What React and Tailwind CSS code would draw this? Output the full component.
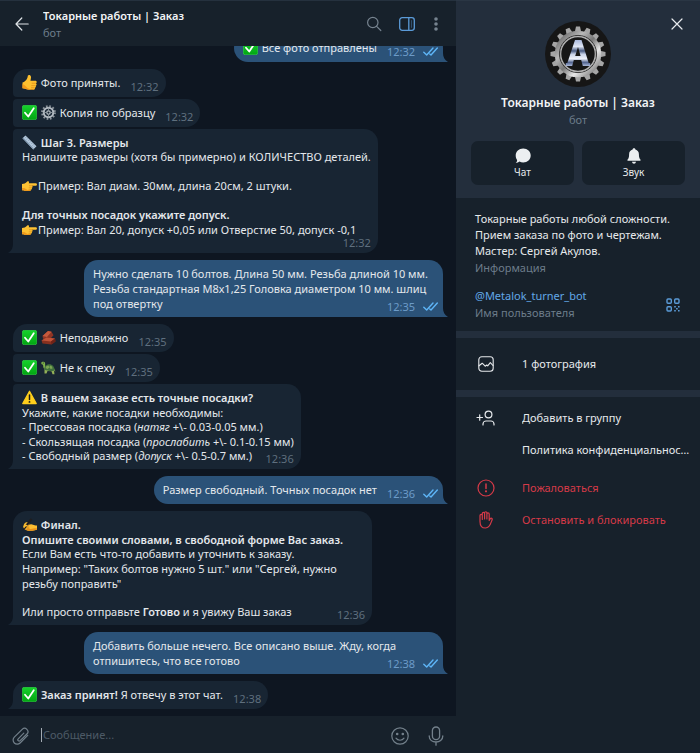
import React from "react";

/* ---------- emoji drawings ---------- */

const emojiClass = "mr-px inline-block size-[15px] align-[-3px]";

function CheckEmoji() {
  return (
    <svg viewBox="0 0 30 30" className={emojiClass} aria-hidden="true">
      <defs>
        <linearGradient id="checkFill" x1="0" y1="0" x2="0" y2="1">
          <stop offset="0" stopColor="#16d22c" />
          <stop offset="1" stopColor="#02a512" />
        </linearGradient>
      </defs>
      <rect x="0.5" y="0.5" width="29" height="29" rx="4" fill="url(#checkFill)" stroke="#3fe052" strokeWidth="1" />
      <path d="M6 15.500L12.500 23L23.500 6.500" fill="none" stroke="#fff" strokeWidth="3.600" strokeLinecap="round" strokeLinejoin="round" />
    </svg>
  );
}

function ThumbEmoji() {
  return (
    <svg viewBox="0 0 30 30" className={emojiClass} aria-hidden="true">
      <path d="M1 15c4-1 7-4 9-7.500 1.500-2.500 1.200-4.500 1.800-6.300C13.400-.8 17.500.2 18 4c.3 2.500-.8 5-1.200 7.500h9.500c4 0 4 4.600 1.200 5 2.600.8 2 4.600-.5 4.800 1.600 1 1 4-1.200 4.200.8 1.800-.5 3.500-2.500 3.500h-9.500C9 29.500 7 27 1 26.500Z" fill="#fdc02f" />
      <path d="M1 18v8.500C7 27 9 29.500 13.800 29.500h9.500c1 0 1.900-.5 2.300-1.300-5 .7-11 .3-14.600-2.200C8 24 7 20 1 18Z" fill="#f39a1a" />
      <path d="M19.500 16.500h8M18.500 21.300h8M18 25.500h7" stroke="#d9820f" strokeWidth="1.200" fill="none" />
    </svg>
  );
}

function GearEmoji() {
  return (
    <svg viewBox="0 0 30 30" className={emojiClass} aria-hidden="true">
      <circle cx="15" cy="15" r="12.800" fill="none" stroke="#8d959c" strokeWidth="4" strokeDasharray="3.350 3.350" />
      <circle cx="15" cy="15" r="9.500" fill="none" stroke="#b3bac1" strokeWidth="4" />
      <circle cx="15" cy="15" r="3.500" fill="none" stroke="#b5bcc2" strokeWidth="2.500" />
      <path d="M15 5v7M15 18v7M5 15h7M18 15h7" stroke="#8f989f" strokeWidth="1.800" />
    </svg>
  );
}

function RulerEmoji() {
  return (
    <svg viewBox="0 0 30 30" className={emojiClass} aria-hidden="true">
      <path d="M1 6.500L7 1l22 21.500L22.500 29Z" fill="#b4c8dc" />
      <path d="M1 6.500L22.500 29l1.500-1.500L2.500 5Z" fill="#7f97ae" />
      <path d="M9 3.500l-2.500 2.500M12 6.500L9 9.500M15 9.500l-2.500 2.500M18 12.500l-3 3M21 15.500L18.500 18M24 18.500l-3 3M26.500 21L24 23.500" stroke="#70869c" strokeWidth="1.100" />
    </svg>
  );
}

function PointEmoji() {
  return (
    <svg viewBox="0 0 30 30" className={emojiClass} aria-hidden="true">
      <path d="M0 12c4 0 7-1.500 10-4.500 1.500-1.500 4.500-1 4 1.500l-.5 1.500h14c3.200 0 3.200 5 0 5H20c2 1 1.500 4-.5 4.200 1 1.500.2 3.600-1.600 3.800-.5 1.800-2 2.500-4 2.500H9C6 26 4 24.500 0 24.500Z" fill="#fdc233" />
      <path d="M0 20v4.500c4 0 6 1.500 9 1.500h5c2 0 3.500-.7 4-2.500-5 1-8 .5-11-2-2-1.500-4-1.500-7-1.500Z" fill="#ef9a1c" />
      <path d="M14 15.500h8M13.500 19.700h6M13 23.500h5" stroke="#d17f10" strokeWidth="1.200" />
    </svg>
  );
}

function RockEmoji() {
  return (
    <svg viewBox="0 0 30 30" className={emojiClass} aria-hidden="true">
      <path d="M3 12L14 2l7 1.500 4 7-8 9-13-2Z" fill="#8f3524" />
      <path d="M3 12L14 2l7 1.500-9 10.500Z" fill="#c65a3d" />
      <path d="M1 21l10-6 17 2 1 6-8 6L3 27Z" fill="#86301f" />
      <path d="M1 21l10-6 17 2-8 6Z" fill="#c05439" />
      <path d="M20 23l8-6 1 6-8 6Z" fill="#6f2217" />
    </svg>
  );
}

function TurtleEmoji() {
  return (
    <svg viewBox="0 0 30 30" className={emojiClass} aria-hidden="true">
      <path d="M.5 6c0-3 6-4 7.500-.5C9 8 7 11 10 14l-3 4C3.500 15 5 12 4 9.500 2 9.500.5 8 .5 6Z" fill="#7fb04c" />
      <path d="M7 18l0 9h4l2-5 8 .5 2 6h4l-1-7 3 1.500-3-6Z" fill="#93b058" />
      <path d="M6.500 19c0-7 5-10.500 10.500-10.500s10 5 10.500 12.500c-7 2-15 1-21-2Z" fill="#40703d" />
      <path d="M11 12l4-1 2 4-4 3-4-2ZM18 11l4 2 1 4-4 1-2-4Z" fill="#7da553" />
      <circle cx="4.500" cy="5.800" r="1" fill="#1b2b17" />
    </svg>
  );
}

function WarningEmoji() {
  return (
    <svg viewBox="0 0 30 30" className={emojiClass} aria-hidden="true">
      <path d="M15 2.500L28.500 27H1.500Z" fill="#ffcf1c" stroke="#ffcf1c" strokeWidth="2.500" strokeLinejoin="round" />
      <path d="M15 10v9" stroke="#1e1c14" strokeWidth="3" strokeLinecap="round" />
      <circle cx="15" cy="23.800" r="1.900" fill="#1e1c14" />
    </svg>
  );
}

function WritingEmoji() {
  return (
    <svg viewBox="0 0 30 30" className={emojiClass} aria-hidden="true">
      <path d="M3 17c1-5 5-7 9-7 3 0 3.500 1.500 2 3.500l-1 2c4-1.500 7-1.500 9 0 2 1 4 1.500 8 1.500v9c-5-1-7 1.500-12 1.500-6 0-9-.5-12-2.500-3-2-4-4.500-3-8Z" fill="#fcbd30" />
      <path d="M6 25c3 2 6 2.500 12 2.500 5 0 7-2.500 12-1.500v-3c-5-1-8 1-12 1-4 0-9-1-12 1Z" fill="#e8921b" />
      <path d="M9 17.500h5M8.500 20.500h6M9 23.300h6" stroke="#cf7d13" strokeWidth="1.300" />
      <path d="M1 27.500L4 20L17 2.500l4 2.500L7 23Z" fill="#1f1e20" />
      <path d="M3 19c1.500-2.500 4-3.500 7-3.200 2 .2 2 2.400 0 2.700L6.500 19.500 4 23Z" fill="#fcbd30" />
    </svg>
  );
}

/* ---------- chat bubbles ---------- */

function Ticks() {
  return (
    <svg viewBox="0 0 15 9" className="mb-[3px] h-[9px] w-[15px]" fill="none" stroke="#5eb5f7" strokeWidth="1.400" strokeLinecap="round" strokeLinejoin="round" aria-label="Прочитано">
      <path d="M.8 5.200L3.700 8L10 1M6.800 7L8 8L14.300 1" />
    </svg>
  );
}

function Message({ out = false, tail = false, inline = false, first = false, wide = false, time, children }) {
  const side = out ? "self-end bg-[#2b5278]" : "self-start bg-[#182533]";
  const corners = out
    ? "rounded-[14px] rounded-br-none"
    : `rounded-r-[14px] ${first ? "rounded-tl-[14px]" : "rounded-tl-[4px]"} ${tail ? "rounded-bl-none" : "rounded-bl-[4px]"}`;
  const flow = inline ? "flex items-end justify-between gap-[10px]" : "flex flex-col";
  const footer = inline ? "" : wide ? "-mt-px self-end" : "-mt-[11px] self-end";
  return (
    <article className={`relative shrink-0 pt-[6px] pb-[3px] pl-[9px] ${wide ? "max-w-[372px]" : "max-w-[359px]"} ${out ? "pr-[5px]" : "pr-[7px]"} ${side} ${corners} ${flow}`}>
      <div className={inline ? "mb-[3px] leading-[16px] whitespace-nowrap" : "leading-[15px]"}>{children}</div>
      <div className={`flex items-end gap-[8px] leading-[14px] ${out ? "text-[#6d9bc8]" : "text-[#5f6f7e]"} ${footer}`}>
        <time>{time}</time>
        {out && <Ticks />}
      </div>
      {tail && !out && (
        <svg viewBox="0 0 5 9" className="absolute bottom-0 -left-[5px] h-[9px] w-[5px]" aria-hidden="true">
          <path d="M5 0C5 4 3.500 7 0 9H5Z" fill="#182533" />
        </svg>
      )}
      {out && (
        <svg viewBox="0 0 5 9" className="absolute -right-[5px] bottom-0 h-[9px] w-[5px]" aria-hidden="true">
          <path d="M0 0C0 4 1.500 7 5 9H0Z" fill="#2b5278" />
        </svg>
      )}
    </article>
  );
}

function Group({ children }) {
  return <div className="flex shrink-0 flex-col gap-[2px]">{children}</div>;
}

function Conversation() {
  return (
    <main className="flex min-h-0 flex-1 flex-col justify-end gap-[7px] overflow-hidden bg-[#0e1621] px-[13px] pb-[7px] text-[11px] text-[#e4e8ec]">
      <Group>
        <Message out inline time="12:32"><CheckEmoji /> Все фото отправлены</Message>
      </Group>
      <Group>
        <Message inline first time="12:32"><ThumbEmoji /> Фото приняты.</Message>
        <Message inline time="12:32"><CheckEmoji /> <GearEmoji /> Копия по образцу</Message>
        <Message tail wide time="12:32">
          <p className="font-semibold"><RulerEmoji /> Шаг 3. Размеры</p>
          <p className="leading-[14px]">Напишите размеры (хотя бы примерно) и КОЛИЧЕСТВО деталей.</p>
          <p className="mt-[14px]"><PointEmoji />Пример: Вал диам. 30мм, длина 20см, 2 штуки.</p>
          <p className="mt-[14px] font-semibold">Для точных посадок укажите допуск.</p>
          <p><PointEmoji />Пример: Вал 20, допуск +0,05 или Отверстие 50, допуск -0,1</p>
        </Message>
      </Group>
      <Group>
        <Message out time="12:35">
          Нужно сделать 10 болтов. Длина 50 мм. Резьба длиной 10 мм. Резьба стандартная М8х1,25 Головка диаметром 10 мм. шлиц под отвертку
        </Message>
      </Group>
      <Group>
        <Message inline first time="12:35"><CheckEmoji /> <RockEmoji /> Неподвижно</Message>
        <Message inline time="12:35"><CheckEmoji /> <TurtleEmoji /> Не к спеху</Message>
        <Message tail time="12:36">
          <p className="font-semibold"><WarningEmoji /> В вашем заказе есть точные посадки?</p>
          <p>Укажите, какие посадки необходимы:</p>
          <p className="leading-[14px]">- Прессовая посадка (<i>натяг</i> +\- 0.03-0.05 мм.)</p>
          <p>- Скользящая посадка (<i>прослабить</i> +\- 0.1-0.15 мм)</p>
          <p className="leading-[14px]">- Свободный размер (<i>допуск</i> +\- 0.5-0.7 мм.)</p>
        </Message>
      </Group>
      <Group>
        <Message out inline time="12:36">Размер свободный. Точных посадок нет</Message>
      </Group>
      <Group>
        <Message tail first time="12:36">
          <p className="font-semibold"><WritingEmoji /> Финал.</p>
          <p className="font-semibold">Опишите своими словами, в свободной форме Вас заказ.</p>
          <p className="leading-[14px]">Если Вам есть что-то добавить и уточнить к заказу.</p>
          <p>Например: "Таких болтов нужно 5 шт." или "Сергей, нужно резьбу поправить"</p>
          <p className="mt-[14px] leading-[14px]">Или просто отправьте <b className="font-semibold">Готово</b> и я увижу Ваш заказ</p>
        </Message>
      </Group>
      <Group>
        <Message out time="12:38">
          Добавить больше нечего. Все описано выше. Жду, когда отпишитесь, что все готово
        </Message>
      </Group>
      <Group>
        <Message inline first tail time="12:38"><CheckEmoji /> <b className="font-semibold">Заказ принят!</b> Я отвечу в этот чат.</Message>
      </Group>
    </main>
  );
}

function ChatHeader() {
  return (
    <header className="flex h-[46px] shrink-0 items-center border-t border-[#25313e] bg-[#17212b] pr-[13px] pl-[15px]">
      <button type="button" aria-label="Назад" className="text-[#e0e4e8]">
        <svg viewBox="0 0 14 14" className="size-[14px]" fill="none" stroke="currentColor" strokeWidth="1.200" strokeLinecap="round" strokeLinejoin="round">
          <path d="M13.200 7H1M6.800 1L1 7l5.800 6" />
        </svg>
      </button>
      <div className="ml-[14px] flex min-w-0 flex-1 flex-col">
        <h1 className="truncate text-[11px] leading-[17px] font-semibold text-[#f2f4f6]">Токарные работы | Заказ</h1>
        <span className="text-[11px] leading-[17px] text-[#6c7c8a]">бот</span>
      </div>
      <div className="flex items-center text-[#76838f]">
        <button type="button" aria-label="Поиск">
          <svg viewBox="0 0 16 16" className="size-[16px]" fill="none" stroke="currentColor" strokeWidth="1.200" strokeLinecap="round">
            <circle cx="6.800" cy="6.500" r="5.200" />
            <path d="M10.600 10.300l4.200 4.200" />
          </svg>
        </button>
        <button type="button" aria-label="Информация о чате" className="ml-[17px] text-[#5b9bd8]">
          <svg viewBox="0 0 16 14" className="h-[14px] w-[16px]" fill="none" stroke="currentColor" strokeWidth="1.300">
            <rect x="0.700" y="0.700" width="14.600" height="12.600" rx="2.500" />
            <path d="M9.800 1v12" />
            <path d="M12.500 3.200v7.600" strokeWidth="0.800" opacity=".5" />
          </svg>
        </button>
        <button type="button" aria-label="Меню" className="ml-[14px]">
          <svg viewBox="0 0 14 14" className="size-[14px]" fill="currentColor">
            <circle cx="7" cy="2" r="1.800" />
            <circle cx="7" cy="7" r="1.800" />
            <circle cx="7" cy="12" r="1.800" />
          </svg>
        </button>
      </div>
    </header>
  );
}

function Composer() {
  return (
    <footer className="flex h-[37px] shrink-0 items-center bg-[#17212b] pr-[11px] pl-[12px] text-[#73808b]">
      <button type="button" aria-label="Прикрепить файл" className="mt-[2px]">
        <svg viewBox="0 0 18 18" className="size-[18px]" fill="none" stroke="currentColor" strokeWidth="1.200" strokeLinecap="round" strokeLinejoin="round">
          <path d="M11.800 6.200L6.200 11.800a1.300 1.300 0 0 0 1.900 1.900L14.900 7a3.300 3.300 0 0 0-4.700-4.700L2.300 10.200a4.100 4.100 0 0 0 5.800 5.800l7.600-7.600" />
        </svg>
      </button>
      <label className="ml-[11px] flex min-w-0 flex-1 items-center">
        <span className="h-[14px] w-px bg-[#a3abb3]" aria-hidden="true" />
        <input type="text" aria-label="Сообщение" placeholder="Сообщение..." className="ml-px h-[18px] min-w-0 flex-1 bg-transparent text-[11px] text-[#e4e8ec] outline-none placeholder:text-[#4d5a66]" />
      </label>
      <button type="button" aria-label="Эмодзи" className="mt-[2px]">
        <svg viewBox="0 0 18 18" className="size-[18px]" fill="none" stroke="currentColor" strokeWidth="1.200" strokeLinecap="round">
          <circle cx="9" cy="9" r="8.200" />
          <path d="M5 11.200c1.800 2.700 6.200 2.700 8 0" />
          <circle cx="6.200" cy="7" r=".7" fill="currentColor" />
          <circle cx="11.800" cy="7" r=".7" fill="currentColor" />
        </svg>
      </button>
      <button type="button" aria-label="Голосовое сообщение" className="mt-[2px] ml-[18px]">
        <svg viewBox="0 0 18 20" className="h-[20px] w-[18px]" fill="none" stroke="currentColor" strokeWidth="1.300" strokeLinecap="round">
          <rect x="5.400" y="1" width="7.200" height="12.600" rx="3.600" />
          <path d="M2.200 10c0 8 13.600 8 13.600 0M9 16.200v3" />
        </svg>
      </button>
    </footer>
  );
}

/* ---------- profile panel ---------- */

function Avatar() {
  const teeth = Array.from({ length: 16 }, (_, i) => i * 22.5);
  return (
    <svg viewBox="0 0 66 66" className="size-[66px]" role="img" aria-label="Токарные работы">
      <defs>
        <linearGradient id="steel" x1="0" y1="0" x2="1" y2="1">
          <stop offset="0" stopColor="#5b5b5b" />
          <stop offset=".3" stopColor="#b9b9b9" />
          <stop offset=".5" stopColor="#777" />
          <stop offset=".7" stopColor="#e8e8e8" />
          <stop offset="1" stopColor="#666" />
        </linearGradient>
        <linearGradient id="chrome" x1="0" y1="0" x2="0" y2="1">
          <stop offset="0" stopColor="#a9b8dc" />
          <stop offset=".25" stopColor="#dfe6f5" />
          <stop offset=".42" stopColor="#46587f" />
          <stop offset=".55" stopColor="#c9d3ea" />
          <stop offset=".72" stopColor="#eef2fb" />
          <stop offset=".86" stopColor="#52648f" />
          <stop offset="1" stopColor="#a9b8da" />
        </linearGradient>
      </defs>
      <circle cx="33" cy="33" r="33" fill="#161616" />
      {teeth.map((angle) => (
        <path key={angle} d="M29.800 11L31 5.500h4l1.200 5.500Z" fill="#a6a6a6" transform={`rotate(${angle} 33 33)`} />
      ))}
      <circle cx="33" cy="33" r="20.500" fill="none" stroke="url(#steel)" strokeWidth="5.500" />
      <circle cx="33" cy="33" r="18.600" fill="none" stroke="#3a3a3a" strokeWidth="1" />
      <circle cx="33" cy="33" r="17.300" fill="none" stroke="#b5b5b5" strokeWidth="1.200" />
      <path d="M30 19h6.500l7.200 23h1.500v3h-7.400l-1.600-6h-7.400l-1.600 6h-6.400v-3h1.500ZM33 26l-2.800 9h5.400Z" fill="url(#chrome)" fillRule="evenodd" />
    </svg>
  );
}

function ActionButton({ label, children }) {
  return (
    <button type="button" className="flex h-[44px] flex-1 flex-col items-center gap-[1px] rounded-[7px] bg-[#17212b] pt-[7px] text-[10px] leading-[14px] text-[#e6e9ec]">
      {children}
      {label}
    </button>
  );
}

function MenuRow({ label, danger = false, children }) {
  return (
    <button type="button" className={`flex h-[32px] w-full items-center pl-[19px] text-left ${danger ? "text-[#d63a48]" : "text-[#e6e9ec]"}`}>
      <span className="flex w-[22px] shrink-0 justify-center">{children}</span>
      <span className="ml-[25px] min-w-0 flex-1 truncate pr-[8px]">{label}</span>
    </button>
  );
}

function Profile() {
  return (
    <aside className="flex w-[244px] shrink-0 flex-col bg-[#17212b] text-[11px] leading-[16px] text-[#e6e9ec]">
      <section className="relative flex h-[198px] flex-col items-center border-t border-[#2a3644] bg-[#232e3c] px-[15px] pt-[20px]">
        <button type="button" aria-label="Закрыть" className="absolute top-[17px] right-[17px]">
          <svg viewBox="0 0 12 12" className="size-[12px]" fill="none" stroke="#e8ebee" strokeWidth="1.200" strokeLinecap="round">
            <path d="M1 1l10 10M11 1L1 11" />
          </svg>
        </button>
        <Avatar />
        <h2 className="mt-[7px] text-[12px] leading-[18px] font-semibold text-[#f2f4f6]">Токарные работы | Заказ</h2>
        <span className="text-[#6c7c8a]">бот</span>
        <div className="mt-[13px] flex w-full gap-[8px]">
          <ActionButton label="Чат">
            <svg viewBox="0 0 16 16" className="size-[16px]" fill="#eceff1">
              <path d="M8.200.5c4.300 0 7.500 3 7.500 7s-3.200 7-7.500 7c-1.400 0-2.600-.3-3.700-.9-1 .9-2.300 1.300-3.700 1.300 1-.9 1.400-2 1.300-3C1.200 10.700.7 9.200.7 7.500c0-4 3.200-7 7.500-7Z" />
            </svg>
          </ActionButton>
          <ActionButton label="Звук">
            <svg viewBox="0 0 16 16" className="size-[16px]" fill="#eceff1">
              <path d="M8 .3c.8 0 1.300.5 1.400 1.200 2.200.6 3.500 2.400 3.500 4.800 0 3 .5 4.200 1.500 5.200.5.600.2 1.300-.6 1.300H2.200c-.8 0-1.100-.7-.6-1.300 1-1 1.500-2.200 1.500-5.200 0-2.400 1.300-4.200 3.500-4.800C6.700.8 7.200.3 8 .3ZM6 13.700h4c-.2 1.200-1 2-2 2s-1.800-.8-2-2Z" />
            </svg>
          </ActionButton>
        </div>
      </section>

      <section className="flex flex-col pt-[13px] pr-[20px] pb-[10px] pl-[19px]">
        <p>Токарные работы любой сложности.<br />Прием заказа по фото и чертежам.<br />Мастер: Сергей Акулов.</p>
        <span className="mt-px text-[#6c7c8a]">Информация</span>
        <div className="mt-[12px] flex items-center justify-between">
          <div className="flex flex-col gap-px">
            <a href="#username" className="text-[#62a8e8]">@Metalok_turner_bot</a>
            <span className="text-[#6c7c8a]">Имя пользователя</span>
          </div>
          <button type="button" aria-label="QR-код" className="text-[#5b9bd8]">
            <svg viewBox="0 0 14 14" className="size-[14px]" fill="none" stroke="currentColor" strokeWidth="1.400">
              <rect x="1" y="1" width="4.300" height="4.300" rx="1" />
              <rect x="8.700" y="1" width="4.300" height="4.300" rx="1" />
              <rect x="1" y="8.700" width="4.300" height="4.300" rx="1" />
              <path d="M8.200 8h1.600v1.600H8.200ZM12 8h1.600v1.600H12ZM10.100 10h1.600v1.600h-1.600ZM8.200 12h1.600v1.600H8.200ZM12 12h1.600v1.600H12Z" fill="currentColor" stroke="none" />
            </svg>
          </button>
        </div>
      </section>

      <div className="h-[7px] bg-[#232e3c]" />

      <section className="py-[10px]">
        <MenuRow label="1 фотография">
          <svg viewBox="0 0 16 16" className="size-[16px]" fill="none" stroke="currentColor" strokeWidth="1.100" strokeLinecap="round" strokeLinejoin="round">
            <rect x=".8" y=".8" width="14.400" height="14.400" rx="3" />
            <path d="M1 9.800l3.200-2.600 3 3 1.500-1.200 1 .8 2.600-3.200L15 9.500" />
          </svg>
        </MenuRow>
      </section>

      <div className="h-[7px] bg-[#232e3c]" />

      <section className="flex flex-col pt-[5px]">
        <MenuRow label="Добавить в группу">
          <svg viewBox="0 0 20 16" className="h-[16px] w-[20px]" fill="none" stroke="currentColor" strokeWidth="1.200" strokeLinecap="round">
            <path d="M1 7.500h5.500M3.700 4.800v5.400" />
            <circle cx="12.500" cy="4.500" r="3.400" />
            <path d="M7 15v-1c0-1.500 1.500-3 3-3h5c1.500 0 3 1.500 3 3v1" />
          </svg>
        </MenuRow>
        <MenuRow label="Политика конфиденциальности" />
        <div className="h-[6px]" />
        <MenuRow danger label="Пожаловаться">
          <svg viewBox="0 0 18 18" className="size-[18px]" fill="none" stroke="currentColor" strokeWidth="1.200" strokeLinecap="round">
            <circle cx="9" cy="9" r="8" />
            <path d="M9 5v4.500" strokeWidth="1.500" />
            <circle cx="9" cy="12.300" r=".5" fill="currentColor" />
          </svg>
        </MenuRow>
        <MenuRow danger label="Остановить и блокировать">
          <svg viewBox="0 0 14 18" className="h-[18px] w-[14px]" fill="none" stroke="currentColor" strokeWidth="1.200" strokeLinecap="round" strokeLinejoin="round">
            <path d="M1 10.500V4.600a1.100 1.100 0 0 1 2.300 0V8.500M3.300 8V2.500a1.150 1.150 0 0 1 2.300 0V8M5.600 7.500V1.900a1.150 1.150 0 0 1 2.300 0V8M7.900 8V3a1.150 1.150 0 0 1 2.300 0v6.500l1-1.700c.8-1.200 2.400-.3 1.900.9-1.200 3-2.100 8.300-6.600 8.300C2.500 17 1 14.500 1 10.500" />
          </svg>
        </MenuRow>
      </section>
    </aside>
  );
}

export default function App() {
  return (
    <div className="flex h-screen bg-[#17212b] font-['Noto_Sans','Open_Sans',sans-serif]">
      <div className="flex min-w-0 flex-1 flex-col">
        <ChatHeader />
        <Conversation />
        <Composer />
      </div>
      <Profile />
    </div>
  );
}
